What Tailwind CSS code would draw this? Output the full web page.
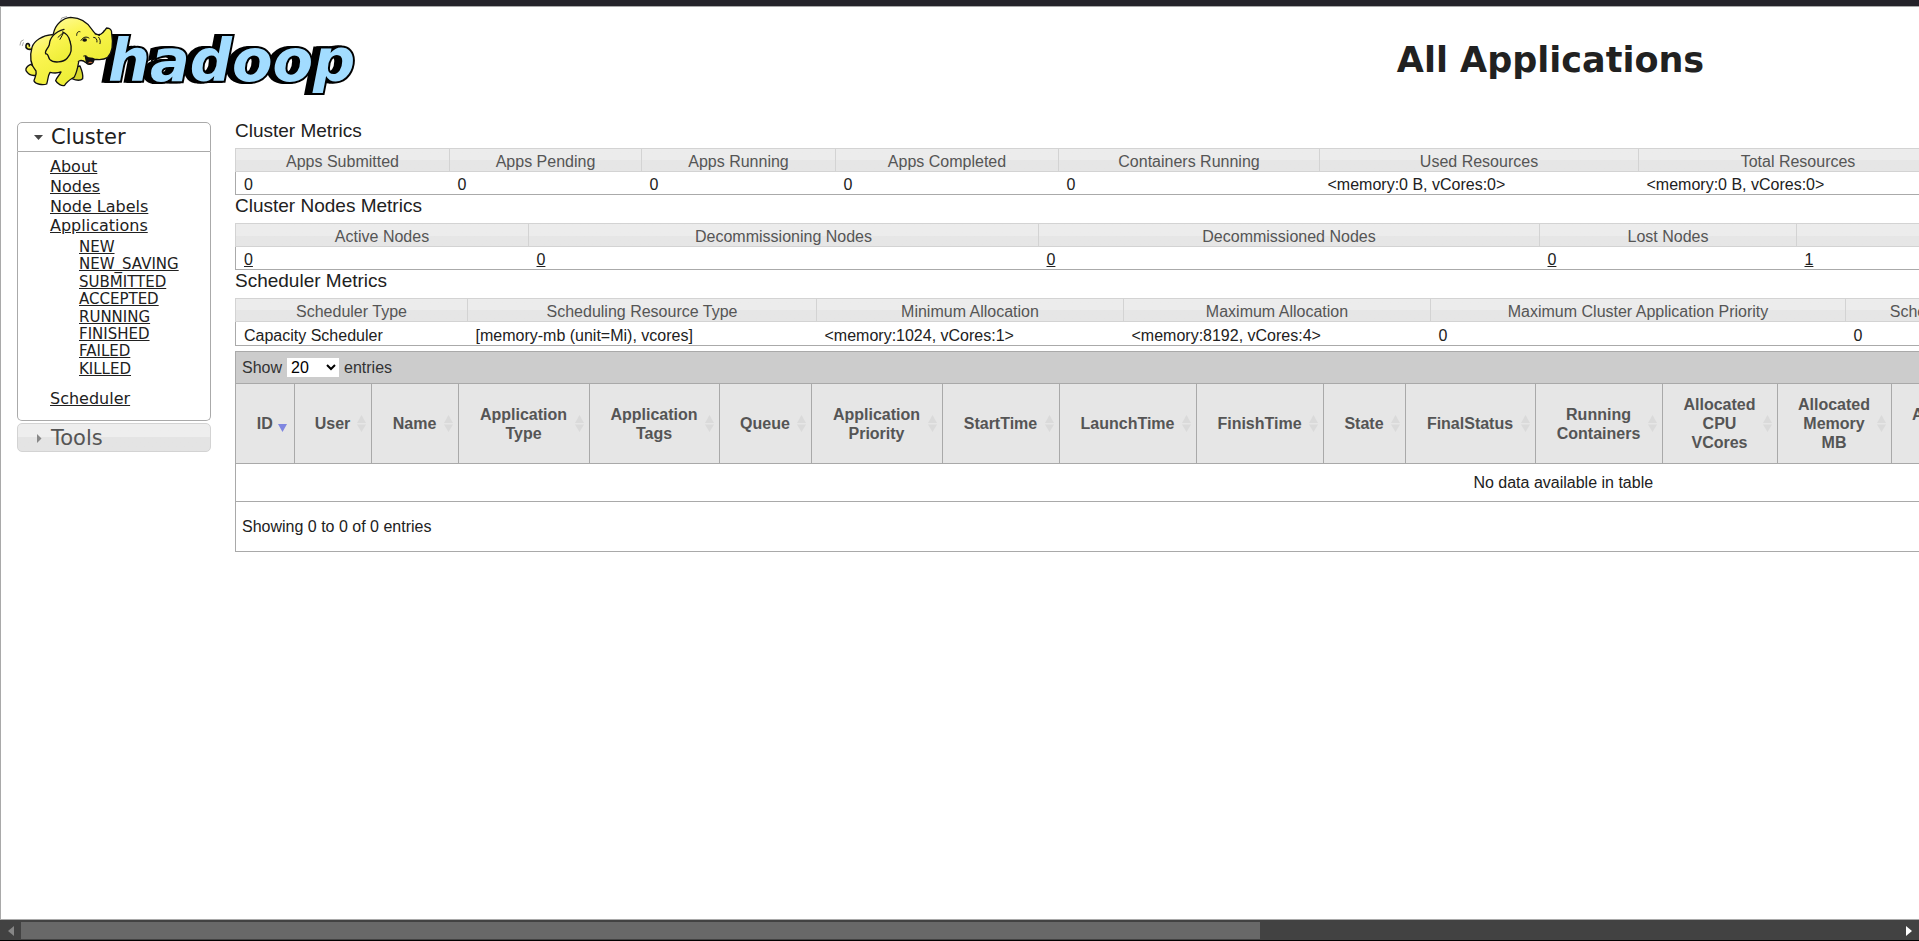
<!DOCTYPE html>
<html lang="en">
<head>
<meta charset="utf-8">
<title>All Applications</title>
<script src="https://cdn.jsdelivr.net/npm/@tailwindcss/browser@4"></script>
</head>
<body class="flex h-screen flex-col overflow-hidden bg-white font-['Liberation_Sans',Arial,sans-serif] text-base text-[#212121]">
<div class="h-[6px] shrink-0 bg-[#25232a]"></div>
<div class="min-h-0 flex-1 overflow-hidden border-y border-l border-[#a9a9a9]">
<div class="w-[2900px]">
  <header class="flex h-[113px] items-start">
    <svg class="h-[100px] w-[370px] shrink-0" viewBox="1 7 370 100" role="img" aria-label="Hadoop">
      <defs>
        <linearGradient id="skin" x1="0" y1="0" x2="0.5" y2="1"><stop offset="0" stop-color="#fffb9a"/><stop offset=".4" stop-color="#fbf552"/><stop offset="1" stop-color="#eeee38"/></linearGradient>
      </defs>
      <text x="108" y="81" class="fill-[#a2dcff] stroke-black font-['DejaVu_Sans',Verdana,sans-serif] text-[59px] font-bold italic [filter:drop-shadow(-3px_0_0_#000)_drop-shadow(-3px_0_0_#000)] [paint-order:stroke]" stroke-width="4">hadoop</text>
      <g transform="translate(10 10) scale(.3333)" fill="url(#skin)" stroke="#111" stroke-width="4" stroke-linejoin="round" stroke-linecap="round">
        <path d="M68 116C54 122 46 114 48 106C50 98 60 100 58 108" stroke-width="5"/>
        <path d="M62 163C52 168 46 174 48 182C54 192 66 198 78 196L84 176Z"/>
        <path d="M186 206C198 211 212 212 218 206C220 196 216 182 210 168L190 172Z" fill="#d8d82c"/>
        <path d="M126 74C98 76 72 92 66 112C58 140 62 165 78 183C81 195 73 204 72 213C76 222 98 227 110 222C114 212 113 198 120 187C132 190 142 190 153 186C148 197 139 203 137 212C142 222 156 229 164 226C170 214 182 208 193 201C200 188 203 174 206 156L170 80Z"/>
        <path d="M130 72C136 40 160 24 182 22C212 23 234 38 247 60C255 73 264 76 273 72C281 68 284 60 290 54C300 54 306 60 305 70C310 100 308 128 292 143C279 152 264 148 252 148C250 163 236 168 228 158C221 152 214 150 207 153C190 158 170 160 150 150Z" stroke="none"/>
        <path d="M130 72C136 40 160 24 182 22C212 23 234 38 247 60C255 73 264 76 273 72C281 68 284 60 290 54C300 54 306 60 305 70C310 100 308 128 292 143C279 152 264 148 252 148C250 163 236 168 228 158C221 152 214 150 207 153" fill="none"/>
        <path d="M162 58C134 65 119 84 118 104C113 118 101 126 108 132C115 130 113 138 119 148C130 160 160 158 172 144C184 132 186 112 180 94C177 80 168 70 158 66" />
        <path d="M144 82L162 66L150 88" fill="none" stroke-width="3"/>
        <path d="M226 139C234 147 244 143 252 147C249 160 240 166 230 159Z" fill="#111"/>
        <path d="M234 160C238 154 245 155 248 158Z" fill="#c56a38" stroke="none"/>
        <path d="M221 138C225 136 229 137 232 140M200 76C200 68 204 63 210 65M213 91C219 80 230 79 237 84M255 72L269 76M251 82C258 82 262 88 261 96M266 82C271 88 272 94 270 101M282 62C279 68 273 73 267 76" fill="none" stroke-width="3"/>
        <ellipse cx="224" cy="90" rx="7" ry="5" fill="#111" stroke="none"/>
        <path d="M152 32L155 24L170 20M30 105L33 94L40 90M37 107L40 98" fill="none" stroke="#777" stroke-width="2"/>
      </g>
    </svg>
    <h1 class="-ml-[171px] flex-1 pt-[32px] text-center font-['DejaVu_Sans',Verdana,sans-serif] text-[35px] leading-[42px] font-bold">All Applications</h1>
  </header>

  <div class="flex items-start">
    <nav class="mt-[2px] ml-[16px] w-[194px] shrink-0 font-['DejaVu_Sans',Verdana,sans-serif]">
      <button class="flex h-[30px] w-full items-center rounded-t-[5px] border border-[#aaa] bg-white pt-[2px] text-[21px]" aria-expanded="true">
        <svg class="mr-[8px] ml-[16px] h-[9px] w-[9px]" viewBox="0 0 9 9"><path d="M0 1h9L4.500 6z" fill="#454545"/></svg>Cluster</button>
      <div class="h-[269px] rounded-b-[5px] border border-t-0 border-[#aaa] pt-[5px] pl-[32px]">
        <ul class="grid h-[79px] leading-[19px] underline">
          <li><a href="#">About</a></li><li><a href="#">Nodes</a></li><li><a href="#">Node Labels</a></li><li><a href="#">Applications</a></li>
        </ul>
        <ul class="mt-[3px] grid h-[139px] pl-[29px] text-[15px] leading-[17px] underline">
          <li><a href="#">NEW</a></li><li><a href="#">NEW_SAVING</a></li><li><a href="#">SUBMITTED</a></li><li><a href="#">ACCEPTED</a></li><li><a href="#">RUNNING</a></li><li><a href="#">FINISHED</a></li><li><a href="#">FAILED</a></li><li><a href="#">KILLED</a></li>
        </ul>
        <a class="mt-[9px] block underline" href="#">Scheduler</a>
      </div>
      <button class="mt-[2px] flex h-[29px] w-full items-center rounded-[5px] border border-[#d3d3d3] bg-linear-to-b from-[#eee] from-50% to-[#e4e4e4] to-50% pt-[2px] text-[21px] text-[#555]" aria-expanded="false">
        <svg class="mr-[8px] ml-[16px] h-[9px] w-[9px]" viewBox="0 0 9 9"><path d="M3 0v9L7.500 4.500z" fill="#888"/></svg>Tools</button>
    </nav>

    <main class="mr-[9px] ml-[24px] min-w-0 flex-1">
      <h2 class="pb-[6px] text-[19px] leading-[22px]">Cluster Metrics</h2>
      <table class="w-full table-fixed border-collapse border border-[#aaa] leading-[18px]">
        <colgroup><col class="w-[214px]"><col class="w-[192px]"><col class="w-[194px]"><col class="w-[223px]"><col class="w-[261px]"><col class="w-[319px]"><col class="w-[319px]"><col></colgroup>
        <thead><tr class="h-[23px] bg-linear-to-b from-[#ececec] from-50% to-[#e6e6e6] to-50% text-[#555] *:border *:border-[#d3d3d3] *:p-0 *:pt-[4px] *:font-normal">
          <th>Apps Submitted</th><th>Apps Pending</th><th>Apps Running</th><th>Apps Completed</th><th>Containers Running</th><th>Used Resources</th><th>Total Resources</th><td></td></tr></thead>
        <tbody><tr class="h-[23px] *:p-0 *:pt-[4px] *:pl-[8px]"><td>0</td><td>0</td><td>0</td><td>0</td><td>0</td><td>&lt;memory:0 B, vCores:0&gt;</td><td>&lt;memory:0 B, vCores:0&gt;</td><td></td></tr></tbody>
      </table>
      <h2 class="pb-[6px] text-[19px] leading-[22px]">Cluster Nodes Metrics</h2>
      <table class="w-full table-fixed border-collapse border border-[#aaa] leading-[18px]">
        <colgroup><col class="w-[293px]"><col class="w-[510px]"><col class="w-[501px]"><col class="w-[257px]"><col></colgroup>
        <thead><tr class="h-[23px] bg-linear-to-b from-[#ececec] from-50% to-[#e6e6e6] to-50% text-[#555] *:border *:border-[#d3d3d3] *:p-0 *:pt-[4px] *:font-normal">
          <th>Active Nodes</th><th>Decommissioning Nodes</th><th>Decommissioned Nodes</th><th>Lost Nodes</th><td></td></tr></thead>
        <tbody><tr class="h-[23px] underline *:p-0 *:pt-[4px] *:pl-[8px]"><td><a href="#">0</a></td><td><a href="#">0</a></td><td><a href="#">0</a></td><td><a href="#">0</a></td><td><a href="#">1</a></td></tr></tbody>
      </table>
      <h2 class="pb-[6px] text-[19px] leading-[22px]">Scheduler Metrics</h2>
      <table class="w-full table-fixed border-collapse border border-[#aaa] leading-[18px]">
        <colgroup><col class="w-[232px]"><col class="w-[349px]"><col class="w-[307px]"><col class="w-[307px]"><col class="w-[415px]"><col class="w-[253px]"><col></colgroup>
        <thead><tr class="h-[23px] bg-linear-to-b from-[#ececec] from-50% to-[#e6e6e6] to-50% text-[#555] *:border *:border-[#d3d3d3] *:p-0 *:pt-[4px] *:font-normal">
          <th>Scheduler Type</th><th>Scheduling Resource Type</th><th>Minimum Allocation</th><th>Maximum Allocation</th><th>Maximum Cluster Application Priority</th><th>Scheduler Busyness %</th><td></td></tr></thead>
        <tbody><tr class="h-[24px] *:p-0 *:pt-[5px] *:pl-[8px]"><td>Capacity Scheduler</td><td>[memory-mb (unit=Mi), vcores]</td><td>&lt;memory:1024, vCores:1&gt;</td><td>&lt;memory:8192, vCores:4&gt;</td><td>0</td><td>0</td><td></td></tr></tbody>
      </table>

      <section class="mt-[5px] border border-[#a9a9a9]">
        <div class="flex h-[31px] items-center gap-[5px] bg-[#ccc] pl-[6px] text-[#333]">
          <label for="len">Show</label>
          <select id="len" class="h-[19px] w-[52px] bg-white text-black"><option>20</option></select>
          <span>entries</span>
        </div>
        <table class="w-full table-fixed border-collapse leading-[19px]">
          <colgroup><col class="w-[58px]"><col class="w-[77px]"><col class="w-[87px]"><col class="w-[131px]"><col class="w-[130px]"><col class="w-[92px]"><col class="w-[131px]"><col class="w-[117px]"><col class="w-[137px]"><col class="w-[127px]"><col class="w-[82px]"><col class="w-[130px]"><col class="w-[127px]"><col class="w-[115px]"><col class="w-[114px]"><col class="w-[114px]"><col></colgroup>
          <thead><tr id="heads" class="h-[80px] border-y border-[#a9a9a9] bg-[#e6e6e6] text-[#555] *:relative *:border-r *:border-[#a9a9a9] *:p-0 *:font-bold">
            <th>ID<svg class="absolute top-[40px] right-[7px] h-[8px] w-[9px]" viewBox="0 0 9 8"><path d="M0 0h9L4.500 8z" fill="#7f86e0"/></svg></th>
            <th>User</th><th>Name</th><th>Application<br>Type</th><th>Application<br>Tags</th><th>Queue</th><th>Application<br>Priority</th><th>StartTime</th><th>LaunchTime</th><th>FinishTime</th><th>State</th><th>FinalStatus</th><th>Running<br>Containers</th><th>Allocated<br>CPU<br>VCores</th><th>Allocated<br>Memory<br>MB</th><th>Allocated<br>GPUs</th><td></td>
          </tr></thead>
          <tbody><tr class="h-[38px] border-b border-[#a9a9a9]"><td colspan="17" class="text-center">No data available in table</td></tr></tbody>
        </table>
        <div class="flex h-[49px] items-center pl-[6px]">Showing 0 to 0 of 0 entries</div>
      </section>
    </main>
  </div>
</div>
</div>
<div class="flex h-[21px] shrink-0 items-center border-b border-black bg-[#424242] pt-[1px]" role="scrollbar" aria-orientation="horizontal">
  <div class="flex w-[21px] justify-center"><svg class="h-[10px] w-[6px]" viewBox="0 0 6 10"><path d="M6 0v10L0 5z" fill="#868686"/></svg></div>
  <div class="flex h-[17px] flex-1"><div class="w-[66%] bg-[#686868]"></div></div>
  <div class="flex w-[21px] justify-center"><svg class="h-[10px] w-[6px]" viewBox="0 0 6 10"><path d="M0 0v10L6 5z" fill="#fff"/></svg></div>
</div>
<template id="sorter"><svg class="absolute top-[31px] right-[5px] h-[17px] w-[9px]" viewBox="0 0 9 17"><path d="M0 8h9L4.500 0zM0 9.500h9L4.500 17z" fill="#dadada"/></svg></template>
<script>
  // Give every unsorted column its pair of sort arrows
  const sorter = document.getElementById('sorter');
  document.querySelectorAll('#heads th:not(:first-child)').forEach(th => th.append(sorter.content.cloneNode(true)));
</script>
</body>
</html>
